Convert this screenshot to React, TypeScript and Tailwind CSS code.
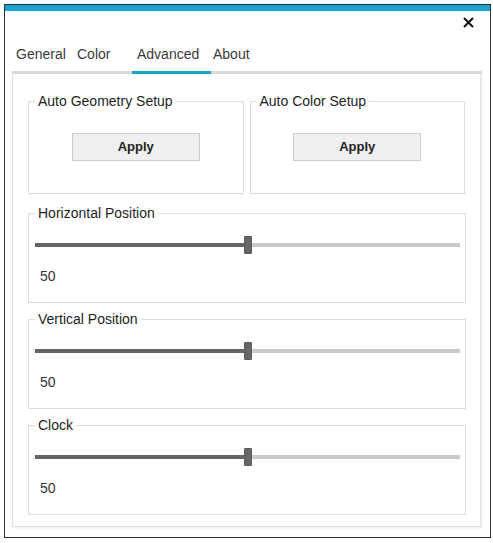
import React from "react"

const font = { fontFamily: '"Liberation Sans", Arial, sans-serif' }

function Tab({ label, active, className }: { label: string; active?: boolean; className: string }) {
  return (
    <div
      className={
        "h-[31px] -mb-[3px] border-b-[3px] pt-[3px] text-[14px] leading-[16px] text-[#3a3a3a] " +
        (active ? "border-[#1ca3cf] " : "border-transparent ") +
        className
      }
    >
      {label}
    </div>
  )
}

function Group({ title, className, children }: { title: string; className?: string; children?: React.ReactNode }) {
  return (
    <fieldset className={"border border-[#dcdcdc] " + (className || "")}>
      <legend className="ml-[6px] px-[3px] text-[14px] leading-[16px] text-[#1e1e1e]">{title}</legend>
      {children}
    </fieldset>
  )
}

function ApplyGroup({ title }: { title: string }) {
  return (
    <Group title={title} className="w-[216px] h-[101px]">
      <div className="flex justify-center mt-[24px]">
        <button className="w-[128px] h-[28px] bg-[#efefef] border border-[#cdcdcd] text-[13px] font-bold text-[#1e1e1e]">
          Apply
        </button>
      </div>
    </Group>
  )
}

function SliderGroup({ title, value }: { title: string; value: number }) {
  return (
    <Group title={title} className="w-[438px] h-[98px]">
      <div className="relative h-[18px] mt-[15px] ml-[6px] mr-[5px]">
        <div className="absolute left-0 right-0 top-[7px] h-[4px] bg-[#c9c9c9]" />
        <div className="absolute left-0 top-[7px] h-[4px] bg-[#656565]" style={{ width: `${value}%` }} />
        <div
          className="absolute top-0 w-[8px] h-[18px] -ml-[4px] bg-[#676767] border border-[#5a5a5a] rounded-[1px]"
          style={{ left: `${value}%` }}
        />
      </div>
      <div className="mt-[14px] ml-[11px] text-[14px] leading-[16px] text-[#333]">{value}</div>
    </Group>
  )
}

export default function App() {
  return (
    <div className="w-[493px] h-[543px] bg-white pt-[4px] pl-[4px]" style={font}>
      <div className="w-[487px] h-[534px] border border-[#2e2e2e] flex flex-col bg-white">
        <div className="h-[6px] bg-[#1ca3cf]" />
        <div className="h-[32px] flex justify-end items-start pt-[6px] pr-[16px]">
          <svg width="11" height="11" viewBox="0 0 11 11">
            <path d="M1 1L10 10M10 1L1 10" stroke="#111" strokeWidth="2" />
          </svg>
        </div>
        <div className="ml-[7px] w-[470px] flex border-b-[3px] border-[#dadada]">
          <Tab label="General" className="w-[60px] pl-[4px]" />
          <Tab label="Color" className="w-[60px] pl-[5px]" />
          <Tab label="Advanced" active className="w-[79px] pl-[5px]" />
          <Tab label="About" className="pl-[2px]" />
        </div>
        <div className="ml-[7px] w-[469px] h-[453px] border border-t-0 border-[#e2e2e2] shadow-[1px_1px_3px_rgba(0,0,0,0.08)] px-[15px] pt-[19px]">
          <div className="flex gap-[6px]">
            <ApplyGroup title="Auto Geometry Setup" />
            <ApplyGroup title="Auto Color Setup" />
          </div>
          <div className="mt-[11px] flex flex-col gap-[8px]">
            <SliderGroup title="Horizontal Position" value={50} />
            <SliderGroup title="Vertical Position" value={50} />
            <SliderGroup title="Clock" value={50} />
          </div>
        </div>
      </div>
    </div>
  )
}
